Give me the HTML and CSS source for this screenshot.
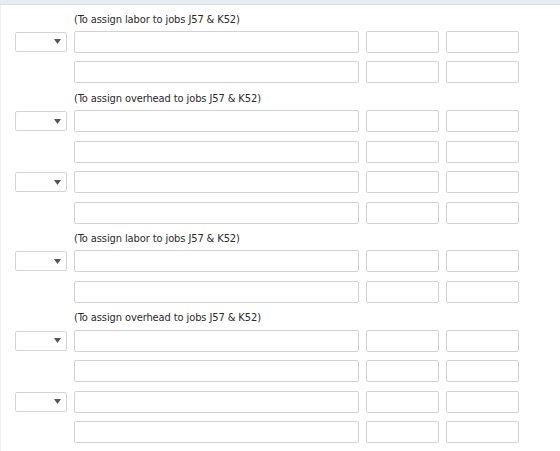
FILE: index.html
```html
<!DOCTYPE html>
<html lang="en">
<head>
  <meta charset="UTF-8">
  <meta name="viewport" content="width=device-width, initial-scale=1.0">
  <title>Journal entries</title>
  <link rel="stylesheet" href="styles.css">
</head>
<body>
  <div class="topbar"></div>
  <div class="sheet">
    <div class="note">(To assign labor to jobs J57 &amp; K52)</div>
    <div class="row">
      <div class="pick"><svg width="7" height="5" viewBox="0 0 7 5"><path d="M0 0h7L3.5 5z"/></svg></div>
      <input class="account" type="text"><input class="amount" type="text"><input class="amount" type="text">
    </div>
    <div class="row">
      <span></span>
      <input class="account" type="text"><input class="amount" type="text"><input class="amount" type="text">
    </div>

    <div class="note">(To assign overhead to jobs J57 &amp; K52)</div>
    <div class="row">
      <div class="pick"><svg width="7" height="5" viewBox="0 0 7 5"><path d="M0 0h7L3.5 5z"/></svg></div>
      <input class="account" type="text"><input class="amount" type="text"><input class="amount" type="text">
    </div>
    <div class="row">
      <span></span>
      <input class="account" type="text"><input class="amount" type="text"><input class="amount" type="text">
    </div>
    <div class="row">
      <div class="pick"><svg width="7" height="5" viewBox="0 0 7 5"><path d="M0 0h7L3.5 5z"/></svg></div>
      <input class="account" type="text"><input class="amount" type="text"><input class="amount" type="text">
    </div>
    <div class="row">
      <span></span>
      <input class="account" type="text"><input class="amount" type="text"><input class="amount" type="text">
    </div>

    <div class="note">(To assign labor to jobs J57 &amp; K52)</div>
    <div class="row">
      <div class="pick"><svg width="7" height="5" viewBox="0 0 7 5"><path d="M0 0h7L3.5 5z"/></svg></div>
      <input class="account" type="text"><input class="amount" type="text"><input class="amount" type="text">
    </div>
    <div class="row">
      <span></span>
      <input class="account" type="text"><input class="amount" type="text"><input class="amount" type="text">
    </div>

    <div class="note">(To assign overhead to jobs J57 &amp; K52)</div>
    <div class="row">
      <div class="pick"><svg width="7" height="5" viewBox="0 0 7 5"><path d="M0 0h7L3.5 5z"/></svg></div>
      <input class="account" type="text"><input class="amount" type="text"><input class="amount" type="text">
    </div>
    <div class="row">
      <span></span>
      <input class="account" type="text"><input class="amount" type="text"><input class="amount" type="text">
    </div>
    <div class="row">
      <div class="pick"><svg width="7" height="5" viewBox="0 0 7 5"><path d="M0 0h7L3.5 5z"/></svg></div>
      <input class="account" type="text"><input class="amount" type="text"><input class="amount" type="text">
    </div>
    <div class="row">
      <span></span>
      <input class="account" type="text"><input class="amount" type="text"><input class="amount" type="text">
    </div>
  </div>
</body>
</html>
```

FILE: styles.css
```css
html, body {
  margin: 0;
  padding: 0;
  background: #fff;
}
body {
  font-family: "DejaVu Sans Condensed", "DejaVu Sans", sans-serif;
  font-size: 11px;
  color: #2a2a2a;
}
.topbar {
  height: 4px;
  background: #e8ecf0;
  border-bottom: 1px solid #d6dde4;
}
.sheet {
  border-left: 1px solid #e9eef3;
  padding: 7.5px 0 0 14px;
  height: 446px;
  box-sizing: border-box;
  overflow: hidden;
}
.note {
  margin-left: 59px;
  height: 14px;
  line-height: 14px;
  margin-bottom: 4.3px;
  letter-spacing: -0.1px;
}
.row {
  display: grid;
  grid-template-columns: 52px 285px 73px 73px;
  column-gap: 7px;
  align-items: center;
  height: 22px;
  margin-bottom: 8.5px;
}
/* fake dropdown */
.pick {
  height: 20px;
  box-sizing: border-box;
  border: 1px solid #d4d4d4;
  border-radius: 2px;
  display: flex;
  align-items: center;
  justify-content: flex-end;
  padding-right: 5px;
}
.pick svg {
  fill: #555;
}
input {
  margin: 0;
  padding: 0 4px;
  height: 22px;
  box-sizing: border-box;
  border: 1px solid #d2d2d2;
  border-radius: 2px;
  background: #fff;
  font: inherit;
  outline: none;
}
.amount {
  width: 73px;
}
.account {
  width: 285px;
}
```
